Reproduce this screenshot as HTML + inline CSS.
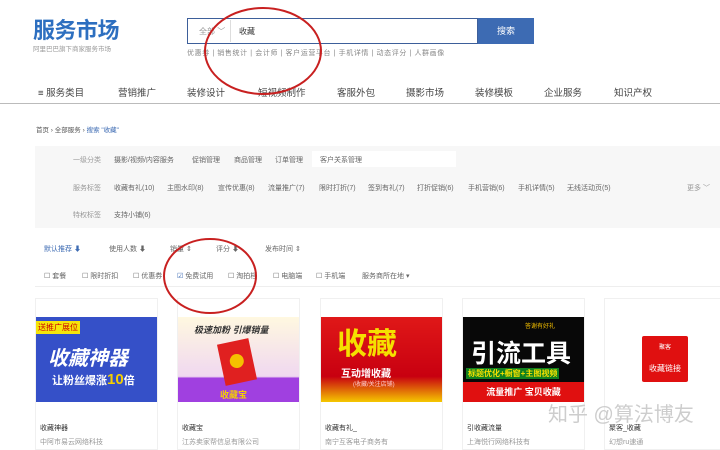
<!DOCTYPE html><html><head><meta charset="utf-8"><style>
body{margin:0;width:720px;height:443px;overflow:hidden;background:#fff;font-family:"Liberation Sans","Noto Sans CJK SC",sans-serif;position:relative;color:#333}
.a{position:absolute;white-space:nowrap}
.s{font-size:7px;color:#666}
.g{color:#999}
.card{position:absolute;top:298px;width:121px;height:150px;border:1px solid #f0f0f0;background:#fff}
.img{position:absolute;left:0;top:18px;width:121px;height:85px;overflow:hidden}
</style></head><body>
<div class="a" style="left:33px;top:13px;font-size:22px;font-weight:bold;color:#2d6fc0;letter-spacing:-0.5px">服务市场</div>
<div class="a" style="left:33px;top:43px;font-size:6.5px;color:#999">阿里巴巴旗下商家服务市场</div>
<div class="a" style="left:187px;top:18px;width:289px;height:24px;border:1px solid #3d5f9a"></div>
<div class="a" style="left:199px;top:26px;font-size:8px;color:#999">全部 ﹀</div>
<div class="a" style="left:230px;top:20px;width:1px;height:22px;background:#ddd"></div>
<div class="a" style="left:239px;top:26px;font-size:8px;color:#333">收藏</div>
<div class="a" style="left:478px;top:18px;width:56px;height:26px;background:#3d6bb3;color:#fff;font-size:9px;text-align:center;line-height:26px">搜索</div>
<div class="a" style="left:187px;top:48px;font-size:7px;color:#888;letter-spacing:0.6px">优惠券 | 销售统计 | 会计师 | 客户运营平台 | 手机详情 | 动态评分 | 人群画像</div>
<div class="a" style="left:38px;top:85px;font-size:9.5px;color:#444">≡ 服务类目</div>
<div class="a" style="left:118px;top:85px;font-size:9.5px;color:#444">营销推广</div>
<div class="a" style="left:187px;top:85px;font-size:9.5px;color:#444">装修设计</div>
<div class="a" style="left:258px;top:85px;font-size:9.5px;color:#444">短视频制作</div>
<div class="a" style="left:337px;top:85px;font-size:9.5px;color:#444">客服外包</div>
<div class="a" style="left:406px;top:85px;font-size:9.5px;color:#444">摄影市场</div>
<div class="a" style="left:475px;top:85px;font-size:9.5px;color:#444">装修模板</div>
<div class="a" style="left:544px;top:85px;font-size:9.5px;color:#444">企业服务</div>
<div class="a" style="left:614px;top:85px;font-size:9.5px;color:#444">知识产权</div>
<div class="a" style="left:0;top:103px;width:720px;height:1px;background:#bbb"></div>
<div class="a" style="left:36px;top:124px;font-size:6.5px;color:#555">首页 › 全部服务 › <span style="color:#3d6bb3">搜索 "收藏"</span></div>
<div class="a" style="left:35px;top:146px;width:685px;height:82px;background:#f7f7f7"></div>
<div class="a" style="left:312px;top:151px;width:144px;height:16px;background:#fff"></div>
<div class="a s g" style="left:73px;top:155px">一级分类</div>
<div class="a s" style="left:114px;top:155px">摄影/视频/内容服务</div>
<div class="a s" style="left:192px;top:155px">促销管理</div>
<div class="a s" style="left:234px;top:155px">商品管理</div>
<div class="a s" style="left:275px;top:155px">订单管理</div>
<div class="a s" style="left:320px;top:155px">客户关系管理</div>
<div class="a s g" style="left:73px;top:183px">服务标签</div>
<div class="a s" style="left:114px;top:183px">收藏有礼(10)</div>
<div class="a s" style="left:167px;top:183px">主图水印(8)</div>
<div class="a s" style="left:218px;top:183px">宣传优惠(8)</div>
<div class="a s" style="left:268px;top:183px">流量推广(7)</div>
<div class="a s" style="left:319px;top:183px">限时打折(7)</div>
<div class="a s" style="left:368px;top:183px">签到有礼(7)</div>
<div class="a s" style="left:417px;top:183px">打折促销(6)</div>
<div class="a s" style="left:468px;top:183px">手机营销(6)</div>
<div class="a s" style="left:518px;top:183px">手机详情(5)</div>
<div class="a s" style="left:567px;top:183px">无线活动页(5)</div>
<div class="a s g" style="left:687px;top:183px">更多 ﹀</div>
<div class="a s g" style="left:73px;top:210px">特权标签</div>
<div class="a s" style="left:114px;top:210px">支持小铺(6)</div>
<div class="a s" style="left:44px;top:244px;color:#3d6bb3">默认推荐 ⬇</div>
<div class="a s" style="left:109px;top:244px">使用人数 ⬇</div>
<div class="a s" style="left:170px;top:244px">销量 ⇕</div>
<div class="a s" style="left:216px;top:244px">评分 ⬇</div>
<div class="a s" style="left:265px;top:244px">发布时间 ⇕</div>
<div class="a s" style="left:44px;top:271px">☐ 套餐</div>
<div class="a s" style="left:82px;top:271px">☐ 限时折扣</div>
<div class="a s" style="left:133px;top:271px">☐ 优惠券</div>
<div class="a s" style="left:177px;top:271px"><span style="color:#3d6bb3">☑</span> 免费试用</div>
<div class="a s" style="left:228px;top:271px">☐ 淘拍档</div>
<div class="a s" style="left:273px;top:271px">☐ 电脑端</div>
<div class="a s" style="left:316px;top:271px">☐ 手机端</div>
<div class="a s" style="left:362px;top:271px">服务商所在地 ▾</div>
<div class="a" style="left:35px;top:286px;width:685px;height:1px;background:#eee"></div>

<div class="card" style="left:35px"><div class="img" style="background:#3550c8">
<div class="a" style="left:0;top:4px;background:#f5e50a;color:#c00;font-size:8px;padding:1px 2px">送推广展位</div>
<div class="a" style="left:12px;top:25px;font-size:20px;font-weight:bold;color:#fff;font-style:italic">收藏神器</div>
<div class="a" style="left:16px;top:54px;font-size:11px;font-weight:bold;color:#fff">让粉丝爆涨<span style="color:#f5d000;font-size:15px">10</span>倍</div></div>
<div class="a s" style="left:4px;top:124px;color:#333">收藏神器</div><div class="a s" style="left:4px;top:138px;color:#999">中阿市易云网络科技</div></div>

<div class="card" style="left:177px"><div class="img" style="background:linear-gradient(#fff8e0,#f0d8f0 70%,#a040e0 72%)">
<div class="a" style="left:16px;top:6px;font-size:9px;font-weight:bold;font-style:italic;color:#333">极速加粉 引爆销量</div>
<div class="a" style="left:43px;top:24px;width:32px;height:42px;background:#e02020;transform:rotate(-12deg)"><div style="margin:13px auto;width:14px;height:14px;border-radius:50%;background:#f5c000"></div></div>
<div class="a" style="left:42px;top:71px;font-size:9px;font-weight:bold;color:#f5d000">收藏宝</div></div>
<div class="a s" style="left:4px;top:124px;color:#333">收藏宝</div><div class="a s" style="left:4px;top:138px;color:#999">江苏卖家帮信息有限公司</div></div>

<div class="card" style="left:320px"><div class="img" style="background:linear-gradient(#e01818,#c80010 70%,#f5c800)">
<div class="a" style="left:16px;top:2px;font-size:30px;font-weight:bold;color:#f5e000">收藏</div>
<div class="a" style="left:20px;top:48px;font-size:10px;font-weight:bold;color:#fff">互动增收藏</div>
<div class="a" style="left:32px;top:62px;font-size:6px;color:#fcc">(收藏/关注店铺)</div></div>
<div class="a s" style="left:4px;top:124px;color:#333">收藏有礼_</div><div class="a s" style="left:4px;top:138px;color:#999">南宁互客电子商务有</div></div>

<div class="card" style="left:462px"><div class="img" style="background:#080808">
<div class="a" style="left:62px;top:4px;font-size:6px;color:#f5c000">答谢有好礼</div>
<div class="a" style="left:8px;top:17px;font-size:25px;font-weight:bold;color:#fff">引流工具</div>
<div class="a" style="left:3px;top:51px;font-size:8px;font-weight:bold;color:#f5e000;background:#108020;padding:0 2px">标题优化+橱窗+主图视频</div>
<div class="a" style="left:0;top:65px;width:121px;height:20px;background:#e01010;color:#fff;font-size:9px;font-weight:bold;line-height:20px;text-align:center">流量推广 宝贝收藏</div></div>
<div class="a s" style="left:4px;top:124px;color:#333">引收藏流量</div><div class="a s" style="left:4px;top:138px;color:#999">上海悦行网络科技有</div></div>

<div class="card" style="left:604px"><div class="img">
<div class="a" style="left:37px;top:19px;width:46px;height:46px;background:#e01010;border-radius:2px;color:#fff;text-align:center">
<div style="font-size:6px;margin-top:6px">聚客</div><div style="font-size:8px;margin-top:12px">收藏链接</div></div></div>
<div class="a s" style="left:4px;top:124px;color:#333">聚客_收藏</div><div class="a s" style="left:4px;top:138px;color:#999">幻想ru速通</div></div>

<div class="a" style="left:548px;top:398px;font-size:20px;color:rgba(200,200,200,0.9)">知乎 @算法博友</div>

<svg class="a" style="left:0;top:0" width="720" height="443"><ellipse cx="263" cy="51" rx="58" ry="43" fill="none" stroke="#c82020" stroke-width="2"/><ellipse cx="210" cy="276" rx="46" ry="37" fill="none" stroke="#c82020" stroke-width="2"/></svg>
</body></html>
